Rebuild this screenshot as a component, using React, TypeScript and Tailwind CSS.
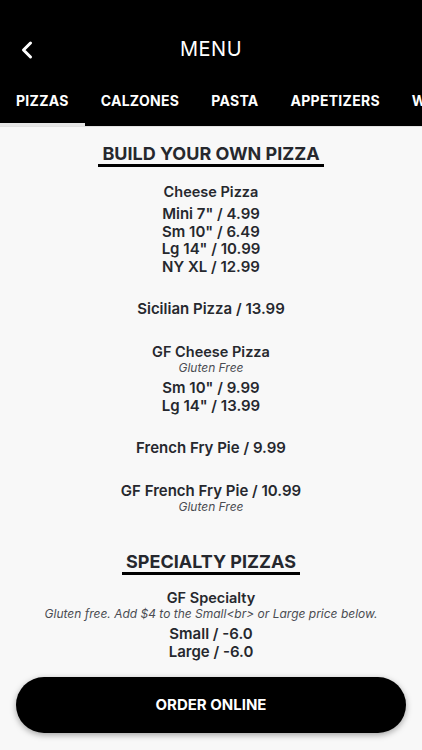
import { ChevronLeft } from "lucide-react";

type Item = {
  name?: string;
  note?: string;
  prices: string[];
};

const TABS = ["PIZZAS", "CALZONES", "PASTA", "APPETIZERS", "WINGS"];

const BUILD: Item[] = [
  { name: "Cheese Pizza", prices: ['Mini 7" / 4.99', 'Sm 10" / 6.49', 'Lg 14" / 10.99', "NY XL / 12.99"] },
  { prices: ["Sicilian Pizza / 13.99"] },
  { name: "GF Cheese Pizza", note: "Gluten Free", prices: ['Sm 10" / 9.99', 'Lg 14" / 13.99'] },
  { prices: ["French Fry Pie / 9.99"] },
  { prices: ["GF French Fry Pie / 10.99"], note: "Gluten Free" },
];

const SPECIALTY: Item[] = [
  {
    name: "GF Specialty",
    note: "Gluten free. Add $4 to the Small<br> or Large price below.",
    prices: ["Small / -6.0", "Large / -6.0"],
  },
];

function SectionTitle({ children }: { children: string }) {
  return (
    <div className="flex justify-center">
      <h2 className="px-1 border-b-[3px] border-black text-[18px] leading-[21px] font-bold text-[#26282e]">
        {children}
      </h2>
    </div>
  );
}

function MenuItem({ item }: { item: Item }) {
  // price-only rows put the note after the price
  if (!item.name) {
    return (
      <div className="flex flex-col items-center">
        {item.prices.map((p) => (
          <div key={p} className="text-[15px] leading-[18px] font-semibold">{p}</div>
        ))}
        {item.note && <div className="text-[12px] leading-[14px] italic text-[#4a4c52]">{item.note}</div>}
      </div>
    );
  }
  return (
    <div className="flex flex-col items-center">
      <div className="text-[14.5px] leading-[18px] font-semibold">{item.name}</div>
      {item.note && <div className="text-[12px] leading-[14px] italic text-[#4a4c52]">{item.note}</div>}
      <div className="mt-1 flex flex-col items-center">
        {item.prices.map((p) => (
          <div key={p} className="text-[15px] leading-[17.5px] font-semibold">{p}</div>
        ))}
      </div>
    </div>
  );
}

export default function App() {
  return (
    <div className="relative w-[422px] h-[750px] overflow-hidden bg-[#f8f8f8] text-[#26282e]" style={{ fontFamily: "Inter, 'Noto Sans', sans-serif" }}>
      {/* Header */}
      <header className="bg-black text-white pt-5">
        <div className="relative h-[58px] flex items-center justify-center">
          <button className="absolute left-[13px] top-[16px] text-white">
            <ChevronLeft size={28} strokeWidth={2.6} />
          </button>
          <h1 className="text-[20px] font-normal tracking-wide">MENU</h1>
        </div>
        <nav className="flex h-12 whitespace-nowrap overflow-hidden">
          {TABS.map((t, i) => (
            <div
              key={t}
              className={`px-4 flex items-center text-[14px] font-bold tracking-[0.02em] border-b-[3px] ${
                i === 0 ? "border-[#e6e6e6]" : "border-transparent"
              }`}
            >
              {t}
            </div>
          ))}
        </nav>
      </header>
      <div className="h-px bg-[#e2e2e2]" />

      {/* Content */}
      <main className="pt-4 pb-28 flex flex-col items-center text-center">
        <SectionTitle>BUILD YOUR OWN PIZZA</SectionTitle>
        <div className="mt-4 flex flex-col gap-[25px]">
          {BUILD.map((it, i) => (
            <MenuItem key={i} item={it} />
          ))}
        </div>

        <div className="mt-[37px]">
          <SectionTitle>SPECIALTY PIZZAS</SectionTitle>
        </div>
        <div className="mt-[14px] flex flex-col gap-6">
          {SPECIALTY.map((it, i) => (
            <MenuItem key={i} item={it} />
          ))}
        </div>
      </main>

      {/* Order button */}
      <div className="absolute left-4 right-4 bottom-[17px]">
        <button className="w-full h-14 rounded-full bg-black text-white text-[15px] font-bold shadow-[0_2px_6px_rgba(0,0,0,0.35)]">
          ORDER ONLINE
        </button>
      </div>
    </div>
  );
}
